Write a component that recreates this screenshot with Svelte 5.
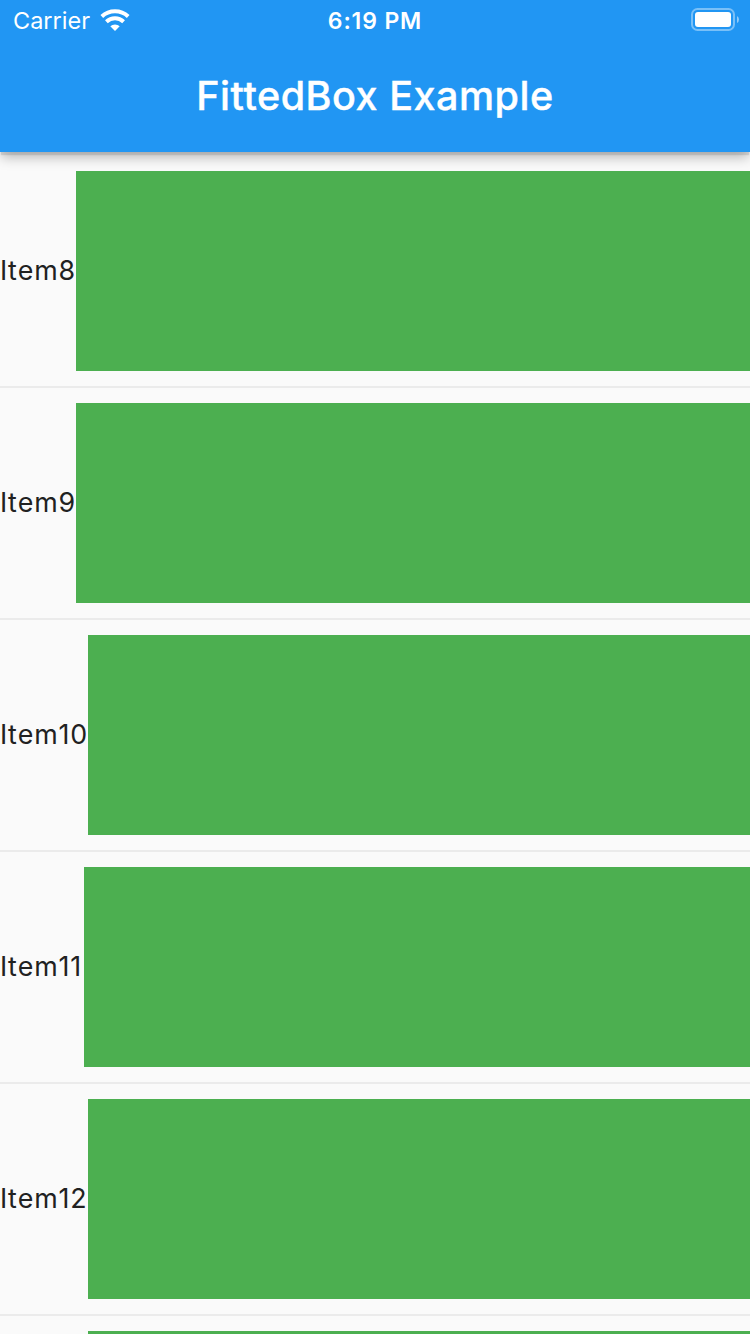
<script>
  const items = [
    { label: 'Item8', w: 76 }, { label: 'Item9', w: 76 }, { label: 'Item10', w: 88 },
    { label: 'Item11', w: 84 }, { label: 'Item12', w: 88 }, { label: '', w: 88 }
  ];
</script>

<div class="screen">
  <header>
    <div class="status">
      <div class="carrier">
        <span>Carrier</span>
        <svg class="wifi" width="30" height="22" viewBox="0 0 30 22">
          <g fill="none" stroke="#fff" stroke-width="4">
            <path d="M1.8 7.5a19.5 19.5 0 0 1 26.4 0" />
            <path d="M6.4 12.7a12.6 12.6 0 0 1 17.2 0" />
          </g>
          <path d="M15 22l-4.7-4.7a6.8 6.8 0 0 1 9.4 0z" fill="#fff" />
        </svg>
      </div>
      <div class="time">6:19 PM</div>
      <svg class="battery" width="49" height="24" viewBox="0 0 49 24">
        <rect x="1" y="1" width="42" height="21" rx="5.5" fill="none" stroke="#fff" stroke-opacity=".4" stroke-width="2" />
        <rect x="4" y="4" width="36" height="15" rx="3" fill="#fff" />
        <path d="M46 8v7q2-1.2 2-3.5t-2-3.5z" fill="#fff" fill-opacity=".5" />
      </svg>
    </div>
    <h1>FittedBox Example</h1>
  </header>
  <main>
    {#each items as item}
      <div class="row">
        <div class="label" style="width: {item.w}px"><span>{item.label}</span></div>
        <div class="box"></div>
      </div>
      <div class="divider"></div>
    {/each}
  </main>
</div>

<style>
  .screen { width: 750px; height: 1334px; overflow: hidden; background: #fafafa; display: flex; flex-direction: column; font-family: Inter, sans-serif; }
  header { height: 152px; flex: none; background: #2196f3; color: #fff; box-shadow: 0 4px 1px -1px rgba(0,0,0,.1), 0 6px 12px -1px rgba(0,0,0,.28); z-index: 1; }
  .status { height: 40px; display: grid; grid-template-columns: 1fr auto 1fr; align-items: center; font-size: 24px; line-height: 40px; }
  .carrier { display: flex; align-items: center; gap: 9.7px; padding-left: 13px; }
  .carrier span { font-size: 23.5px; padding-top: 2px; line-height: 38px; }
  .time { font-size: 23px; font-weight: 600; letter-spacing: .85px; padding-top: 2px; line-height: 38px; }
  .battery { justify-self: end; margin-right: 10px; }
  h1 { margin: 0; height: 112px; line-height: 113px; text-align: center; font-size: 39.5px; font-weight: 500; letter-spacing: .52px; -webkit-text-stroke: .4px #fff; }
  main { padding-top: 3px; }
  .row { height: 200px; display: flex; padding: 16px 0 15px; }
  .row:not(:first-child) { padding-top: 15px; }
  .label { flex: none; display: flex; align-items: center; font-size: 26.8px; letter-spacing: .88px; font-kerning: none; font-feature-settings: "calt" 0; color: #212121; white-space: nowrap; }
  .label span { margin-bottom: 2px; }
  .box { flex: 1; background: #4caf50; }
  .divider { height: 2px; background: #ebebeb; }
</style>
